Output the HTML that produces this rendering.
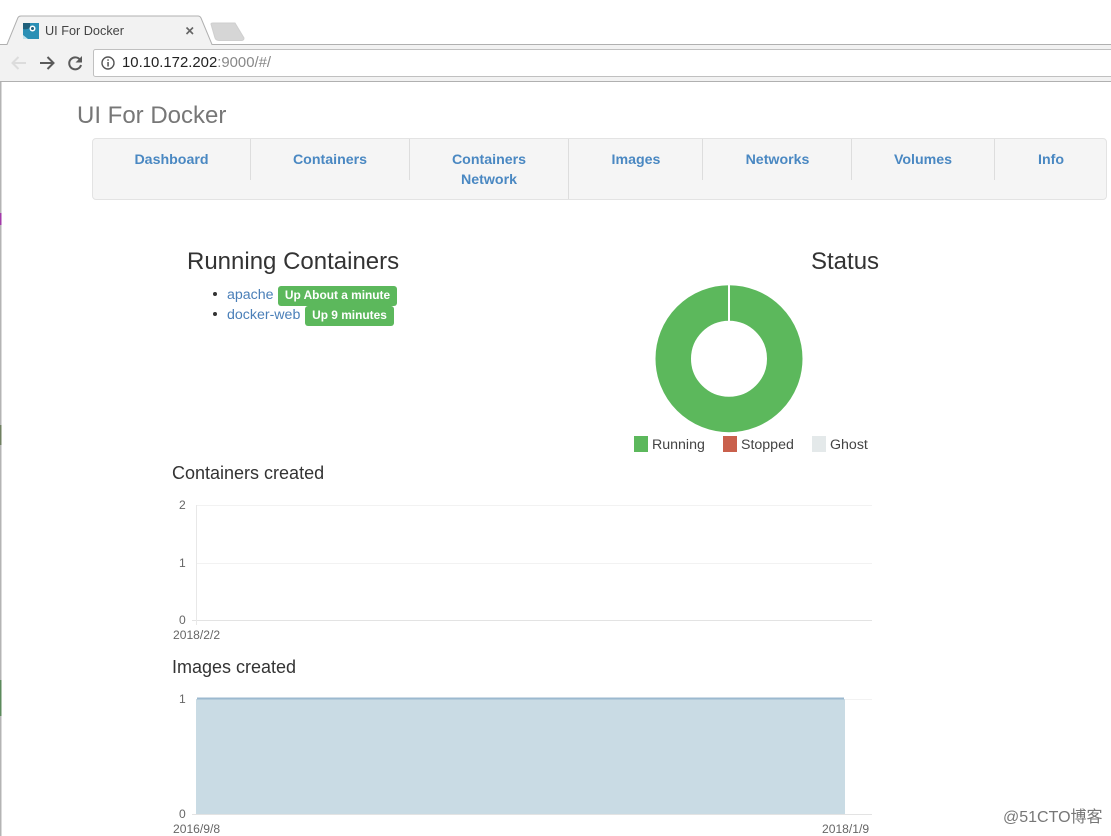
<!DOCTYPE html>
<html><head><meta charset="utf-8">
<style>
html,body{margin:0;padding:0;background:#fff;}
body{width:1111px;height:836px;overflow:hidden;position:relative;font-family:"Liberation Sans",sans-serif;color:#333;}
.a{position:absolute;white-space:nowrap;}
.nav{color:#4a88c2;font-weight:bold;font-size:14.2px;line-height:20px;text-align:center;position:absolute;top:150px;}
.sep{position:absolute;width:1px;background:#ddd;top:139px;}
.badge{position:absolute;background:#5cb85c;color:#fff;font-weight:bold;font-size:11.9px;height:20px;line-height:18px;border-radius:3px;text-align:center;white-space:nowrap;}
.tick{position:absolute;font-size:12.1px;color:#666;white-space:nowrap;line-height:14px;}
.h{position:absolute;font-size:18px;color:#333;line-height:20px;white-space:nowrap;}
.h2{position:absolute;font-size:24px;color:#333;line-height:28px;white-space:nowrap;}
.link{position:absolute;font-size:14.2px;color:#4a7fb8;line-height:20px;white-space:nowrap;}
.leg{position:absolute;font-size:14.2px;color:#444;line-height:16px;white-space:nowrap;}
</style></head>
<body>
<!-- browser chrome -->
<svg class="a" style="left:0;top:0" width="1111" height="84" viewBox="0 0 1111 84">
<rect x="0" y="45" width="1111" height="37" fill="#f2f2f2"/>
<path d="M0 44.500H7L18 17.500Q19 16 21 16H198Q200 16 201 18L212 44.500H1111V46H0Z" fill="#f2f2f2"/>
<path d="M0 44.500H7L18 17.500Q19 16 21 16H198Q200 16 201 18L212 44.500H1111" fill="none" stroke="#b0b0b0" stroke-width="1"/>
<path d="M211 24Q211 23 213 23H235L244 38Q244 40.500 241 40.500H219Q216 40.500 215 38Z" fill="#d6d6d6" stroke="#cfcfcf"/>
<rect x="0" y="81" width="1111" height="1" fill="#b0b0b0"/>
<rect x="93.500" y="49.500" width="1030" height="27" rx="2" fill="#fff" stroke="#c0c0c0"/>
<!-- favicon -->
<rect x="23" y="23" width="16" height="16" fill="#2a8fb5"/>
<path d="M23 23H30V28Q26 30 23 29Z" fill="#1f5f7a"/>
<circle cx="32.500" cy="28.500" r="3" fill="#fff"/>
<circle cx="32.500" cy="28.500" r="1.500" fill="#1f5f7a"/>
<path d="M23 35L28 39H23Z" fill="#bfe3ee"/>
<!-- close -->
<path d="M186.500 27.500L193 34M193 27.500L186.500 34" stroke="#666" stroke-width="1.600"/>
<!-- back -->
<path d="M26 63H13M18.500 57L12.500 63L18.500 69" fill="none" stroke="#dcdcdc" stroke-width="2"/>
<!-- forward -->
<path d="M40 63H53M47.500 57L53.500 63L47.500 69" fill="none" stroke="#5a5a5a" stroke-width="2"/>
<!-- reload -->
<path d="M80.500 60.500A6 6 0 1 0 81 65" fill="none" stroke="#5a5a5a" stroke-width="2"/>
<path d="M82 56V62.500H75.500Z" fill="#5a5a5a"/>
<!-- info -->
<circle cx="108" cy="63" r="6" fill="none" stroke="#555" stroke-width="1.400"/>
<rect x="107.300" y="62" width="1.500" height="4.500" fill="#555"/>
<rect x="107.300" y="59.300" width="1.500" height="1.500" fill="#555"/>
</svg>
<!-- left window edge -->
<svg class="a" style="left:0;top:82px" width="2" height="754" viewBox="0 0 2 754">
<rect width="1.500" height="754" fill="#b4b4b4"/>
<rect y="131" width="1.500" height="12" fill="#a23aa8"/>
<rect y="343" width="1.500" height="20" fill="#6f7f60"/>
<rect y="598" width="1.500" height="36" fill="#5c8a5c"/>
</svg>
<div class="a" style="left:45px;top:23px;font-size:12.7px;line-height:16px;color:#444;">UI For Docker</div>
<div class="a" style="left:122px;top:54px;font-size:14.9px;line-height:18px;color:#222;">10.10.172.202<span style="color:#888">:9000/#/</span></div>

<!-- header -->
<div class="a" style="left:77px;top:101px;font-size:24px;line-height:30px;color:#777;">UI For Docker</div>

<!-- navbar -->
<div class="a" style="left:92px;top:138px;width:1013px;height:60px;background:#f5f5f5;border:1px solid #e3e3e3;border-radius:4px;"></div>
<div class="sep" style="left:250px;height:41px"></div>
<div class="sep" style="left:409px;height:41px"></div>
<div class="sep" style="left:568px;height:60px"></div>
<div class="sep" style="left:702px;height:41px"></div>
<div class="sep" style="left:851px;height:41px"></div>
<div class="sep" style="left:994px;height:41px"></div>
<div class="nav" style="left:93px;width:157px">Dashboard</div>
<div class="nav" style="left:251px;width:158px">Containers</div>
<div class="nav" style="left:410px;width:158px">Containers<br>Network</div>
<div class="nav" style="left:569px;width:134px">Images</div>
<div class="nav" style="left:703px;width:149px">Networks</div>
<div class="nav" style="left:852px;width:142px">Volumes</div>
<div class="nav" style="left:995px;width:112px">Info</div>

<!-- running -->
<div class="h2" style="left:187px;top:248px">Running Containers</div>
<div class="a" style="left:213px;top:292px;width:4px;height:4px;border-radius:50%;background:#333"></div>
<div class="a" style="left:213px;top:312px;width:4px;height:4px;border-radius:50%;background:#333"></div>
<div class="link" style="left:227px;top:285px">apache</div>
<div class="badge" style="left:278px;top:286px;width:119px">Up About a minute</div>
<div class="link" style="left:227px;top:305px">docker-web</div>
<div class="badge" style="left:305px;top:306px;width:89px">Up 9 minutes</div>

<!-- status -->
<div class="h2" style="left:811px;top:248px">Status</div>
<svg class="a" style="left:650px;top:280px" width="160" height="160" viewBox="0 0 160 160">
<circle cx="79" cy="78.700" r="55.750" fill="none" stroke="#5cb85c" stroke-width="35.500"/>
<rect x="78" y="4" width="2" height="38" fill="#fff"/>
</svg>
<div class="a" style="left:634px;top:436px;width:14px;height:16px;background:#5cb85c"></div>
<div class="leg" style="left:652px;top:437px">Running</div>
<div class="a" style="left:723px;top:436px;width:14px;height:16px;background:#c9604c"></div>
<div class="leg" style="left:741px;top:437px">Stopped</div>
<div class="a" style="left:812px;top:436px;width:14px;height:16px;background:#e4e9ea"></div>
<div class="leg" style="left:830px;top:437px">Ghost</div>

<!-- containers created -->
<div class="h" style="left:172px;top:463px">Containers created</div>
<svg class="a" style="left:170px;top:495px" width="710" height="135" viewBox="0 0 710 135">
<path d="M26.500 10.500H702M26.500 68.500H702" stroke="#f2f2f2"/>
<path d="M22 125.500H702" stroke="#e3e3e3"/>
<path d="M26.500 10V130" stroke="#e8e8e8"/>
</svg>
<div class="tick" style="left:179px;top:498px">2</div>
<div class="tick" style="left:179px;top:556px">1</div>
<div class="tick" style="left:179px;top:613px">0</div>
<div class="tick" style="left:173px;top:628px">2018/2/2</div>

<!-- images created -->
<div class="h" style="left:172px;top:657px">Images created</div>
<svg class="a" style="left:170px;top:690px" width="710" height="135" viewBox="0 0 710 135">
<path d="M26.500 9.500H702" stroke="#f2f2f2"/>
<path d="M22 124.500H702" stroke="#e3e3e3"/>
<path d="M26 124V9H675V124Z" fill="#c9dbe4"/>
<path d="M27 8.500H674" stroke="#9cb9cf" stroke-width="2"/>
</svg>
<div class="tick" style="left:179px;top:692px">1</div>
<div class="tick" style="left:179px;top:807px">0</div>
<div class="tick" style="left:173px;top:822px">2016/9/8</div>
<div class="tick" style="left:822px;top:822px">2018/1/9</div>

<!-- watermark -->
<div class="a" style="left:1003px;top:808px;font-size:16px;line-height:20px;color:#777;font-family:'Liberation Sans','Noto Sans CJK SC',sans-serif;">@51CTO博客</div>
</body></html>
